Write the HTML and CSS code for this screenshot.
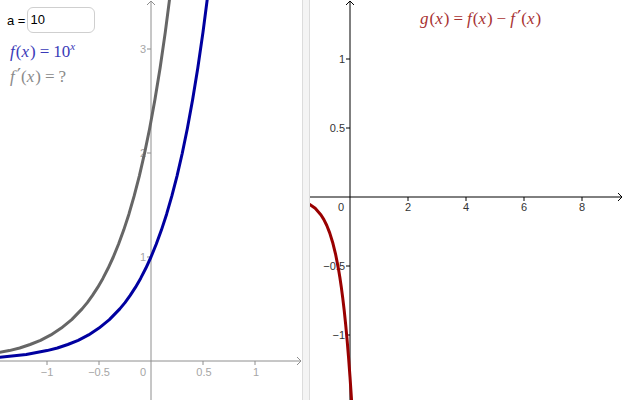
FILE: index.html
```html
<!DOCTYPE html>
<html>
<head>
<meta charset="utf-8">
<link rel="stylesheet" href="styles.css">
</head>
<body>
<div class="app">
  <section class="panel panel-left">
    <svg class="graph" width="302" height="400" viewBox="0 0 302 400">
      <g class="axes-left">
        <line x1="0" y1="361" x2="301" y2="361"/>
        <polyline points="297,357 301,361 297,365" fill="none"/>
        <line x1="151" y1="1" x2="151" y2="400"/>
        <polyline points="147,5 151,1 155,5" fill="none"/>
        <line x1="47" y1="361" x2="47" y2="365"/>
        <line x1="99" y1="361" x2="99" y2="365"/>
        <line x1="203" y1="361" x2="203" y2="365"/>
        <line x1="255" y1="361" x2="255" y2="365"/>
        <line x1="147" y1="257" x2="151" y2="257"/>
        <line x1="147" y1="153" x2="151" y2="153"/>
        <line x1="147" y1="49" x2="151" y2="49"/>
      </g>
      <g class="labels-left">
        <text x="47" y="376" text-anchor="middle">−1</text>
        <text x="99" y="376" text-anchor="middle">−0.5</text>
        <text x="143" y="376" text-anchor="middle">0</text>
        <text x="204" y="376" text-anchor="middle">0.5</text>
        <text x="256" y="376" text-anchor="middle">1</text>
        <text x="146" y="261" text-anchor="end">1</text>
        <text x="146" y="157" text-anchor="end">2</text>
        <text x="146" y="53" text-anchor="end">3</text>
      </g>
      <polyline class="curve-gray" transform="translate(-37.7 0)" points="-0.8,357.4 26.2,354.4 47,350.6 57.4,348 67.8,344.5 78.2,340.3 88.6,334.9 99,328.1 109.4,319.6 119.8,308.9 125,302.6 130.2,295.4 135.4,287.4 140.6,278.4 145.8,268.3 151,257 156.2,244.3 161.4,230.1 166.6,214.2 171.8,196.2 177,176.1 182.2,153.5 187.4,128.2 192.6,99.8 197.8,67.9 203,32.1 208.2,-8"/>
      <polyline class="curve-blue" points="-0.8,357.4 26.2,354.4 47,350.6 57.4,348 67.8,344.5 78.2,340.3 88.6,334.9 99,328.1 109.4,319.6 119.8,308.9 125,302.6 130.2,295.4 135.4,287.4 140.6,278.4 145.8,268.3 151,257 156.2,244.3 161.4,230.1 166.6,214.2 171.8,196.2 177,176.1 182.2,153.5 187.4,128.2 192.6,99.8 197.8,67.9 203,32.1 208.2,-8"/>
    </svg>
    <div class="algebra">
      <div class="input-row">
        <span class="input-label">a =</span>
        <span class="input-box">10</span>
      </div>
      <div class="math math-f"><i>f</i>(<i>x</i>)<span class="op">=</span>10<sup><i>x</i></sup></div>
      <div class="math math-fp"><i>f</i><span class="prime">′</span>(<i>x</i>)<span class="op">=</span>?</div>
    </div>
  </section>
  <div class="divider"></div>
  <section class="panel panel-right">
    <svg class="graph" width="315" height="400" viewBox="0 0 315 400">
      <g class="axes-right">
        <line x1="0" y1="197" x2="312" y2="197"/>
        <polyline points="308,193 312,197 308,201" fill="none"/>
        <line x1="40" y1="1" x2="40" y2="400"/>
        <polyline points="36,5 40,1 44,5" fill="none"/>
        <line x1="98" y1="197" x2="98" y2="201"/>
        <line x1="156" y1="197" x2="156" y2="201"/>
        <line x1="214" y1="197" x2="214" y2="201"/>
        <line x1="272" y1="197" x2="272" y2="201"/>
        <line x1="36" y1="59" x2="40" y2="59"/>
        <line x1="36" y1="128" x2="40" y2="128"/>
        <line x1="36" y1="266" x2="40" y2="266"/>
        <line x1="36" y1="335" x2="40" y2="335"/>
      </g>
      <g class="labels-right">
        <text x="31" y="211" text-anchor="middle">0</text>
        <text x="98" y="211" text-anchor="middle">2</text>
        <text x="156" y="211" text-anchor="middle">4</text>
        <text x="214" y="211" text-anchor="middle">6</text>
        <text x="272" y="211" text-anchor="middle">8</text>
        <text x="35" y="63" text-anchor="end">1</text>
        <text x="35" y="132" text-anchor="end">0.5</text>
        <text x="35" y="270" text-anchor="end">−0.5</text>
        <text x="35" y="339" text-anchor="end">−1</text>
      </g>
      <polyline class="curve-red" points="-0.6,204.2 5.2,208.3 11,215 13.9,219.6 16.8,225.5 19.7,232.9 22.6,242.2 25.5,253.8 28.4,268.6 29.85,277.3 31.3,287.1 32.75,298.1 34.2,310.4 35.65,324.3 37.1,339.8 38.55,357.3 40,376.8 41.45,398.7 42,408"/>
    </svg>
    <div class="math math-g"><i>g</i>(<i>x</i>)<span class="op">=</span><i>f</i>(<i>x</i>)<span class="op">−</span><i>f</i><span class="prime">′</span>(<i>x</i>)</div>
  </section>
</div>
</body>
</html>
```
FILE: styles.css
```css
html, body {
  margin: 0;
  padding: 0;
  background: #ffffff;
  overflow: hidden;
}
.app {
  display: flex;
  width: 625px;
  height: 400px;
  font-family: "Liberation Sans", Arial, sans-serif;
}
.panel {
  position: relative;
  height: 400px;
  overflow: hidden;
}
.panel-left {
  width: 302px;
}
.panel-right {
  width: 315px;
}
.divider {
  width: 6px;
  height: 400px;
  background: #f4f4f4;
  border-left: 1px solid #dcdcdc;
  border-right: 1px solid #dcdcdc;
}
.graph {
  display: block;
}
.axes-left line, .axes-left polyline {
  stroke: #8e8e8e;
  stroke-width: 1;
}
.axes-right line, .axes-right polyline {
  stroke: #000000;
  stroke-width: 1;
}
.labels-left text {
  font-family: "Liberation Sans", Arial, sans-serif;
  font-size: 11px;
  fill: #a6a6a6;
}
.labels-right text {
  font-family: "Liberation Sans", Arial, sans-serif;
  font-size: 11px;
  fill: #333333;
}
.curve-blue {
  fill: none;
  stroke: #0000a0;
  stroke-width: 3;
  stroke-linejoin: round;
}
.curve-gray {
  fill: none;
  stroke: #666666;
  stroke-width: 3;
  stroke-linejoin: round;
}
.curve-red {
  fill: none;
  stroke: #990000;
  stroke-width: 3;
  stroke-linejoin: round;
}
.algebra {
  position: absolute;
  left: 0;
  top: 0;
  display: flex;
  flex-direction: column;
  padding: 7px 0 0 7px;
}
.input-row {
  display: flex;
  align-items: center;
  gap: 2px;
}
.input-label {
  font-size: 13px;
  color: #000;
}
.input-box {
  box-sizing: border-box;
  width: 68px;
  height: 26px;
  border: 1px solid #cfcfcf;
  border-radius: 6px;
  padding: 0 0 0 2px;
  font-size: 13px;
  line-height: 24px;
  color: #000;
  background: #fff;
}
.math {
  font-family: "Liberation Serif", "Times New Roman", serif;
  font-size: 17px;
  white-space: nowrap;
}
.math i {
  font-style: italic;
  padding-right: 1px;
}
.math .op {
  margin: 0 4px;
}
.math .prime {
  font-family: "DejaVu Sans", sans-serif;
  font-size: 19px;
  line-height: 0;
  margin-left: 1px;
}
.math sup {
  font-size: 11px;
  vertical-align: 7px;
  line-height: 0;
}
.math-f {
  color: #3a3ab8;
  margin: 9px 0 0 3px;
}
.math-fp {
  color: #8a8a8a;
  margin: 5px 0 0 3px;
}
.math-g {
  position: absolute;
  left: 110px;
  top: 9px;
  color: #a83232;
}
```
